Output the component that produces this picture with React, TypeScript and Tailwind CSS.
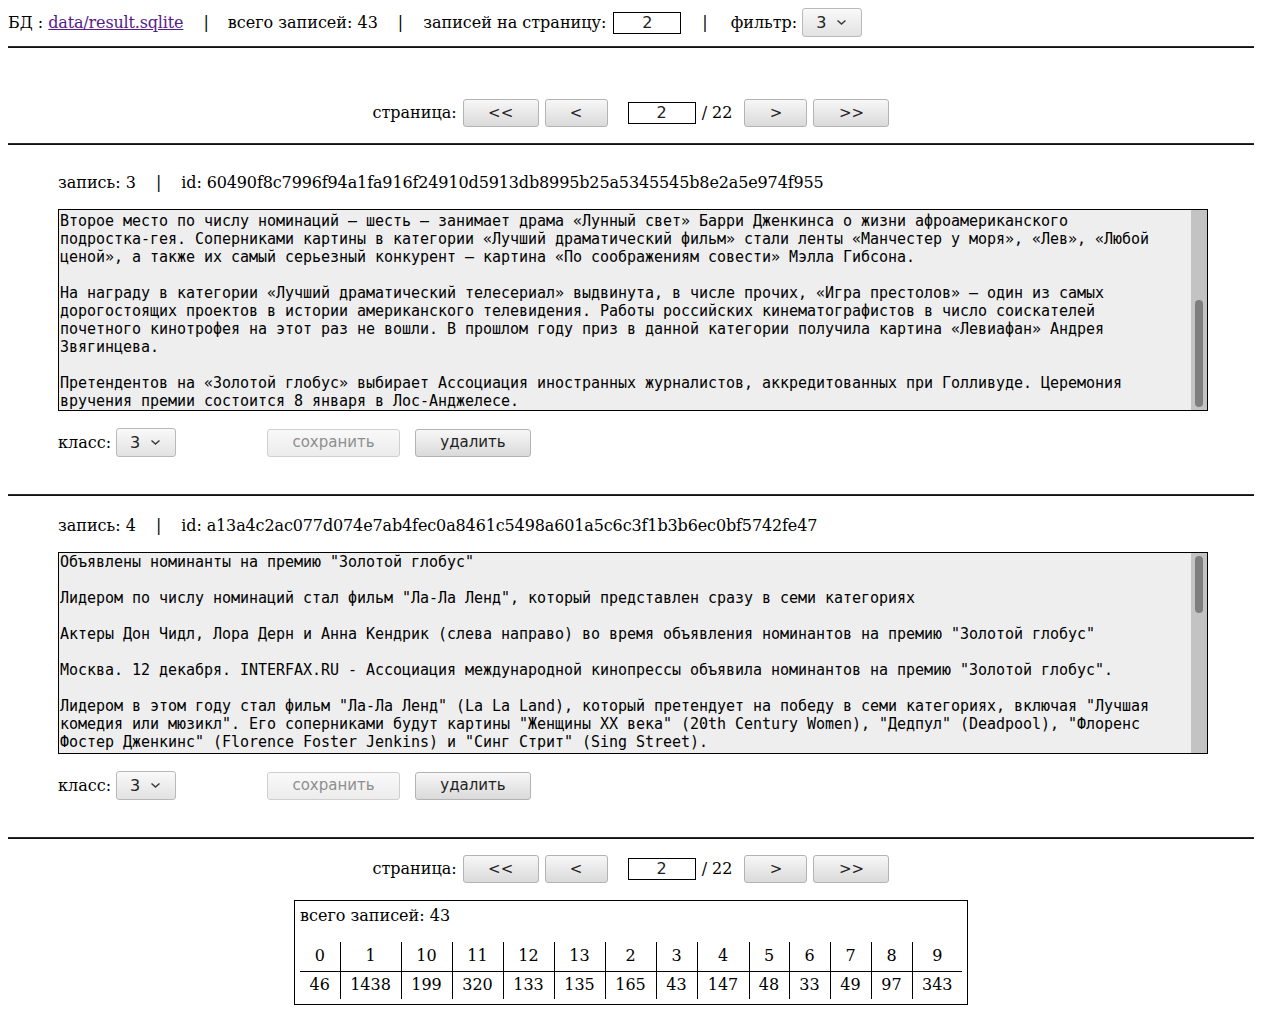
import React from 'react';

const serif = { fontFamily: '"DejaVu Serif", serif' };

const REC1 = [
  'Второе место по числу номинаций — шесть — занимает драма «Лунный свет» Барри Дженкинса о жизни афроамериканского',
  'подростка-гея. Соперниками картины в категории «Лучший драматический фильм» стали ленты «Манчестер у моря», «Лев», «Любой',
  'ценой», а также их самый серьезный конкурент — картина «По соображениям совести» Мэлла Гибсона.',
  '',
  'На награду в категории «Лучший драматический телесериал» выдвинута, в числе прочих, «Игра престолов» — один из самых',
  'дорогостоящих проектов в истории американского телевидения. Работы российских кинематографистов в число соискателей',
  'почетного кинотрофея на этот раз не вошли. В прошлом году приз в данной категории получила картина «Левиафан» Андрея',
  'Звягинцева.',
  '',
  'Претендентов на «Золотой глобус» выбирает Ассоциация иностранных журналистов, аккредитованных при Голливуде. Церемония',
  'вручения премии состоится 8 января в Лос-Анджелесе.',
];

const REC2 = [
  'Объявлены номинанты на премию "Золотой глобус"',
  '',
  'Лидером по числу номинаций стал фильм "Ла-Ла Ленд", который представлен сразу в семи категориях',
  '',
  'Актеры Дон Чидл, Лора Дерн и Анна Кендрик (слева направо) во время объявления номинантов на премию "Золотой глобус"',
  '',
  'Москва. 12 декабря. INTERFAX.RU - Ассоциация международной кинопрессы объявила номинантов на премию "Золотой глобус".',
  '',
  'Лидером в этом году стал фильм "Ла-Ла Ленд" (La La Land), который претендует на победу в семи категориях, включая "Лучшая',
  'комедия или мюзикл". Его соперниками будут картины "Женщины XX века" (20th Century Women), "Дедпул" (Deadpool), "Флоренс',
  'Фостер Дженкинс" (Florence Foster Jenkins) и "Синг Стрит" (Sing Street).',
];

// class -> count, column width
const STATS: [string, string, number][] = [
  ['0', '46', 40], ['1', '1438', 61], ['10', '199', 51], ['11', '320', 51], ['12', '133', 51],
  ['13', '135', 51], ['2', '165', 51], ['3', '43', 41], ['4', '147', 52], ['5', '48', 40],
  ['6', '33', 41], ['7', '49', 41], ['8', '97', 41], ['9', '343', 50],
];

function Sep({ cls = 'px-[20px]' }: { cls?: string }) {
  return <span className={cls}>|</span>;
}

function Select() {
  return (
    <div
      className="inline-flex items-center w-[60px] h-[29px] rounded-[3px] border border-[#b9b9b9] bg-gradient-to-b from-[#f9f9f9] to-[#e2e2e2] pl-[13px] text-[16px] text-[#222]"
      style={{ fontFamily: '"DejaVu Sans", sans-serif' }}
    >
      <span className="leading-none">3</span>
      <svg className="ml-[10px]" width="11" height="7" viewBox="0 0 11 7">
        <path d="M1.5 1.5 L5.5 5 L9.5 1.5" fill="none" stroke="#3a3a3a" strokeWidth="1.5" />
      </svg>
    </div>
  );
}

function Btn({ label, w, disabled }: { label: string; w: number; disabled?: boolean }) {
  return (
    <div
      className={
        'inline-flex items-center justify-center h-[28px] rounded-[3px] border text-[15px] ' +
        (disabled
          ? 'border-[#cfcfcf] bg-gradient-to-b from-[#f9f9f9] to-[#ececec] text-[#8e8e8e]'
          : 'border-[#b3b3b3] bg-gradient-to-b from-[#f7f7f7] to-[#dadada] text-[#222]')
      }
      style={{ width: w, fontFamily: '"DejaVu Sans", sans-serif' }}
    >
      {label}
    </div>
  );
}

function NumBox({ w, h }: { w: number; h: number }) {
  return (
    <div
      className="inline-flex items-center justify-center border border-black bg-white text-[16px] text-[#222]"
      style={{ width: w, height: h, fontFamily: '"DejaVu Sans", sans-serif' }}
    >
      2
    </div>
  );
}

function Hr({ mt }: { mt: string }) {
  return <div className={mt + ' h-[2px] bg-[#2b2b2b] border-b border-[#111]'} />;
}

function Pager() {
  return (
    <div className="flex justify-center items-center h-[28px]">
      <span>страница:</span>
      <div className="ml-[6px]"><Btn label="<<" w={76} /></div>
      <div className="ml-[6px]"><Btn label="<" w={63} /></div>
      <div className="ml-[20px]"><NumBox w={68} h={22} /></div>
      <span className="ml-[6px]">/ 22</span>
      <div className="ml-[12px]"><Btn label=">" w={63} /></div>
      <div className="ml-[6px]"><Btn label=">>" w={76} /></div>
    </div>
  );
}

function Record({ n, id, lines, thumbTop, thumbH, padTop }: { n: number; id: string; lines: string[]; thumbTop: number; thumbH: number; padTop: number }) {
  return (
    <div className="pl-[50px]">
      <div className="h-[20px] leading-[20px] flex">
        <span>запись: {n}</span>
        <Sep />
        <span className="tracking-[-0.13px]">id: {id}</span>
      </div>
      <div className="mt-[16px] w-[1150px] h-[202px] border border-black bg-[#eeeeee] flex overflow-hidden">
        <div
          className="flex-1 pl-[1px] text-[15px] tracking-[-0.03px] text-black overflow-hidden"
          style={{ fontFamily: '"DejaVu Sans Mono", monospace', paddingTop: padTop }}
        >
          {lines.map((l, i) => (
            <div key={i} className="h-[18px] leading-[18px] whitespace-pre">{l}</div>
          ))}
        </div>
        <div className="w-[16px] bg-[#c3c3c3] flex flex-col items-center">
          <div className="w-[8px] rounded-full bg-[#7e7e7e]" style={{ marginTop: thumbTop, height: thumbH }} />
        </div>
      </div>
      <div className="mt-[17px] flex items-center h-[29px]">
        <span>класс:</span>
        <div className="ml-[5px]"><Select /></div>
        <div className="ml-[91px]"><Btn label="сохранить" w={133} disabled /></div>
        <div className="ml-[15px]"><Btn label="удалить" w={116} /></div>
      </div>
    </div>
  );
}

export default function App() {
  return (
    <div className="px-[8px] pt-[8px] pb-[16px] text-[16px] text-black bg-white" style={serif}>
      <div className="flex items-center h-[29px]">
        <span>БД : </span>
        <a className="ml-[5px] text-[#551a8b] underline tracking-[-0.16px]">data/result.sqlite</a>
        <Sep cls="pl-[20px] pr-[19px]" />
        <span>всего записей: 43</span>
        <Sep />
        <span>записей на страницу:</span>
        <div className="ml-[7px]"><NumBox w={68} h={22} /></div>
        <Sep cls="pl-[21px] pr-[23px]" />
        <span>фильтр:</span>
        <div className="ml-[5px]"><Select /></div>
      </div>
      <Hr mt="mt-[9px]" />
      <div className="mt-[51px]"><Pager /></div>
      <Hr mt="mt-[16px]" />
      <div className="mt-[28px]">
        <Record n={3} id="60490f8c7996f94a1fa916f24910d5913db8995b25a5345545b8e2a5e974f955" lines={REC1} thumbTop={90} thumbH={107} padTop={2} />
      </div>
      <Hr mt="mt-[37px]" />
      <div className="mt-[20px]">
        <Record n={4} id="a13a4c2ac077d074e7ab4fec0a8461c5498a601a5c6c3f1b3b6ec0bf5742fe47" lines={REC2} thumbTop={3} thumbH={57} padTop={0} />
      </div>
      <Hr mt="mt-[37px]" />
      <div className="mt-[16px]"><Pager /></div>
      <div className="mt-[17px] flex justify-center">
        <div className="border border-black p-[5px]">
          <div className="h-[20px] leading-[20px]">всего записей: 43</div>
          <table className="mt-[16px] border-collapse">
            <tbody>
              <tr className="border-b border-black">
                {STATS.map(([k, , w], i) => (
                  <td key={k} className={'h-[29px] text-center p-0 ' + (i > 0 ? 'border-l border-black' : '')} style={{ width: w }}>{k}</td>
                ))}
              </tr>
              <tr>
                {STATS.map(([k, v, w], i) => (
                  <td key={k} className={'h-[28px] text-center p-0 ' + (i > 0 ? 'border-l border-black' : '')} style={{ width: w }}>{v}</td>
                ))}
              </tr>
            </tbody>
          </table>
        </div>
      </div>
    </div>
  );
}
